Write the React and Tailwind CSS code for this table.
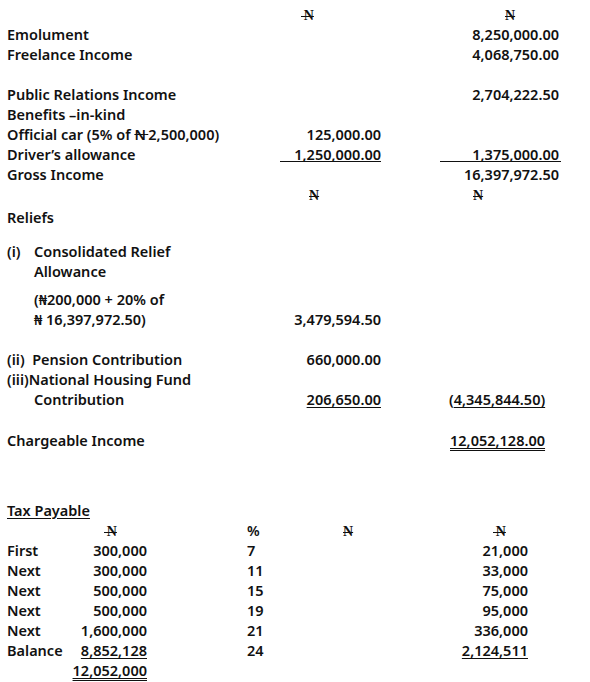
const N = ({ lead = false }) => (
  <span className="font-['Liberation_Serif',serif] font-bold text-[14px] line-through decoration-1">
    {lead ? "\u2009N" : "N"}
  </span>
);

const Row = ({ label, c2, c3, className = "" }) => (
  <div className={"grid grid-cols-[273px_101px_180px] h-[20px] " + className}>
    <div>{label}</div>
    <div>{c2}</div>
    <div>{c3}</div>
  </div>
);

const R = ({ children, className = "" }) => <div className={"text-right " + className}>{children}</div>;

export default function App() {
  return (
    <div className="w-[590px] h-[682px] bg-white text-[#111] font-['Noto_Sans',sans-serif] font-semibold text-[14.5px] leading-[20px] pl-[7px] pt-[4px] overflow-hidden">
      <Row label="" c2={<div className="pl-[21px]"><N lead /></div>} c3={<div className="pl-[124px]"><N /></div>} />
      <Row label="Emolument" c3={<R className="pr-[2px]">8,250,000.00</R>} />
      <Row label="Freelance Income" c3={<R className="pr-[2px]">4,068,750.00</R>} />
      <div className="h-[20px]" />
      <Row label="Public Relations Income" c3={<R className="pr-[2px]">2,704,222.50</R>} />
      <Row label="Benefits –in-kind" />
      <Row
        label={
          <span>
            Official car (5% of <span className="line-through decoration-1">N{"\u2009"}</span>2,500,000)
          </span>
        }
        c2={<R>125,000.00</R>}
      />
      <Row
        label="Driver’s allowance"
        c2={<div className="h-[18px] border-b border-[#111] text-right">1,250,000.00</div>}
        c3={
          <div className="flex justify-end">
            <div className="w-[121px] h-[18px] border-b border-[#111] text-right pr-[2px]">1,375,000.00</div>
          </div>
        }
      />
      <Row label="Gross Income" c3={<R className="pr-[2px]">16,397,972.50</R>} />
      <Row label="" c2={<div className="pl-[29px]"><N /></div>} c3={<div className="pl-[92px]"><N /></div>} />

      <div className="mt-[3px]">Reliefs</div>

      <div className="mt-[14px] flex">
        <div className="w-[27px]">(i)</div>
        <div>
          Consolidated Relief
          <br />
          Allowance
        </div>
      </div>
      <div className="mt-[8px]">
        <Row label={<div className="pl-[27px]">(₦200,000 + 20% of</div>} />
        <Row label={<div className="pl-[27px]">₦ 16,397,972.50)</div>} c2={<R>3,479,594.50</R>} />
      </div>

      <div className="mt-[20px]">
        <Row label={<span className="whitespace-pre">(ii)  Pension Contribution</span>} c2={<R>660,000.00</R>} />
        <Row label="(iii)National Housing Fund" />
        <Row
          label={<div className="pl-[27px]">Contribution</div>}
          c2={<R><span className="underline decoration-1 underline-offset-2">206,650.00</span></R>}
          c3={
            <div className="pl-[68px]">
              (<span className="underline decoration-1 underline-offset-2">4,345,844.50)</span>
            </div>
          }
        />
      </div>

      <div className="mt-[21px]">
        <Row
          label="Chargeable Income"
          c3={<div className="pl-[69px]"><span className="underline decoration-double decoration-1 underline-offset-2">12,052,128.00</span></div>}
        />
      </div>

      <div className="mt-[50px] h-[20px]">
        <span className="underline decoration-1 underline-offset-2">Tax Payable</span>
      </div>

      <div className="grid grid-cols-[60px_80px_100px_96px_14px_171px] auto-rows-[20px]">
        <div />
        <div className="pl-[37px]"><N lead /></div>
        <div />
        <div>%</div>
        <div><N /></div>
        <div className="pl-[136px]"><N lead /></div>

        <div>First</div><R>300,000</R><div /><div>7</div><div /><R>21,000</R>
        <div>Next</div><R>300,000</R><div /><div>11</div><div /><R>33,000</R>
        <div>Next</div><R>500,000</R><div /><div>15</div><div /><R>75,000</R>
        <div>Next</div><R>500,000</R><div /><div>19</div><div /><R>95,000</R>
        <div>Next</div><R>1,600,000</R><div /><div>21</div><div /><R>336,000</R>
        <div>Balance</div>
        <R><span className="underline decoration-1 underline-offset-2">8,852,128</span></R>
        <div />
        <div>24</div>
        <div />
        <R><span className="underline decoration-1 underline-offset-2">2,124,511</span></R>
        <div />
        <R><span className="underline decoration-double decoration-1 underline-offset-2">12,052,000</span></R>
      </div>
    </div>
  );
}
